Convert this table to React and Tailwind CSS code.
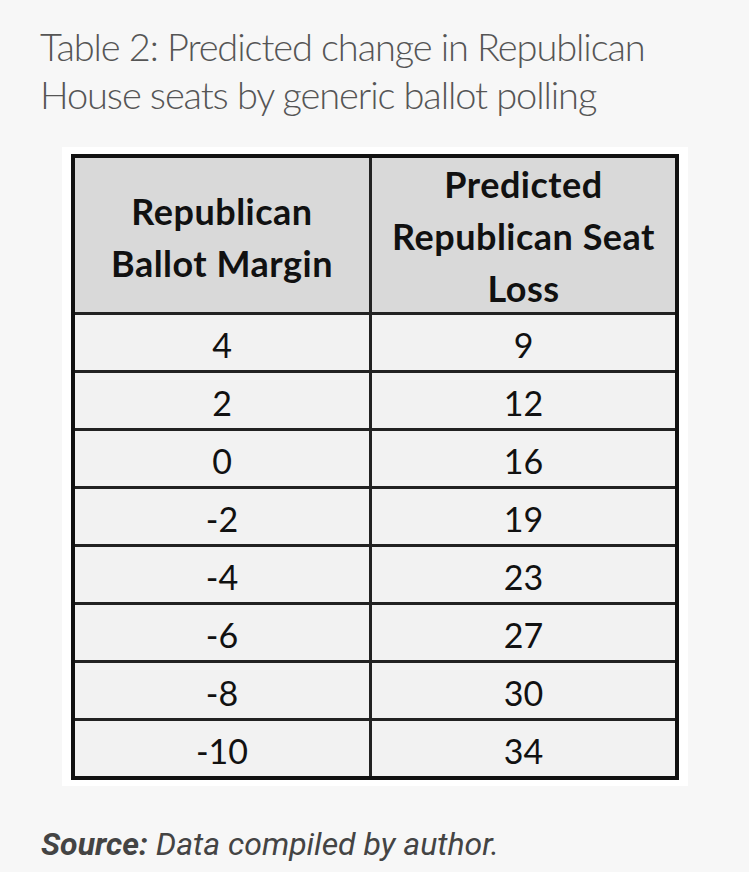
export default function App() {
  const rows = [
    ['4', '9'],
    ['2', '12'],
    ['0', '16'],
    ['-2', '19'],
    ['-4', '23'],
    ['-6', '27'],
    ['-8', '30'],
    ['-10', '34'],
  ]

  return (
    <div className="min-h-[872px] w-[749px] bg-[#f7f7f7] pt-[22px]">
      <h1 className="pl-[40px] font-['Lato',sans-serif] font-light text-[38px] leading-[48px] tracking-[-1.1px] text-[#555]">
        Table 2: Predicted change in Republican
        <br />
        House seats by generic ballot polling
      </h1>

      {/* table image */}
      <div className="ml-[62px] mt-[29px] w-[626px] bg-white px-[9px] pt-[7px] pb-[6px]">
        <div className="border-[4px] border-[#111] font-['Lato',sans-serif] text-[#111]">
          <div className="grid grid-cols-[294px_3px_1fr] h-[154px] bg-[#d9d9d9] font-bold text-[36px] leading-[52px] tracking-[0.5px] text-center">
            <div className="flex items-center justify-center pt-[2px]">
              Republican
              <br />
              Ballot Margin
            </div>
            <div className="bg-[#222]" />
            <div className="flex items-center justify-center">
              Predicted
              <br />
              Republican Seat
              <br />
              Loss
            </div>
          </div>
          {rows.map(([a, b]) => (
            <div
              key={a}
              className="grid grid-cols-[294px_3px_1fr] h-[58px] border-t-[3px] border-[#222] bg-[#f2f2f2] text-[34px] text-center"
            >
              <div className="flex items-center justify-center pt-[3px]">{a}</div>
              <div className="bg-[#222]" />
              <div className="flex items-center justify-center pt-[3px]">{b}</div>
            </div>
          ))}
        </div>
      </div>

      <p className="pl-[41px] mt-[38px] font-['Roboto',sans-serif] italic text-[32px] leading-[40px] text-[#444]">
        <span className="font-bold">Source:</span> Data compiled by author.
      </p>
    </div>
  )
}
